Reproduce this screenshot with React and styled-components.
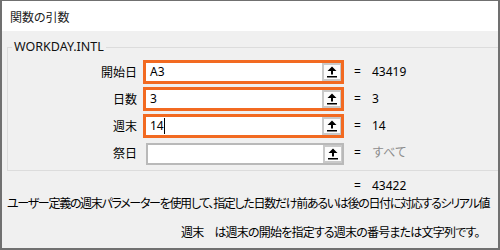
import React from "react";
import styled, { createGlobalStyle } from "styled-components";

const Global = createGlobalStyle`
  html, body { margin: 0; padding: 0; background: #f0f0f0; }
  body { font-family: "Noto Sans", "Noto Sans CJK JP", sans-serif; font-size: 12px; color: #000; }
`;

const Window = styled.div`
  width: 500px;
  height: 250px;
  box-sizing: border-box;
  border: 2px solid #707070;
  border-top-width: 1px;
  background: #f0f0f0;
  overflow: hidden;
  display: flex;
  flex-direction: column;
`;

const TitleBar = styled.div`
  height: 30px;
  flex: none;
  background: #fff;
  display: flex;
  align-items: center;
  padding-left: 8px;
  font-family: "Noto Sans CJK JP", sans-serif;
  font-feature-settings: "palt";
  font-size: 12px;
  color: #1a1a1a;
`;

const Body = styled.div`
  flex: 1;
  padding-left: 5px;
  display: flex;
  flex-direction: column;
  white-space: nowrap;
`;

const Group = styled.fieldset`
  margin: 9px -20px 0 0;
  padding: 0 0 2px 0;
  border: 1px solid #dcdcdc;
  border-right: none;
  min-width: 0;
`;

const Legend = styled.legend`
  margin-left: 4px;
  padding: 0 2px;
  font-size: 12.5px;
  line-height: 14px;
  color: #111;
`;

const Rows = styled.div`
  margin-top: 6px;
  display: flex;
  flex-direction: column;
`;

const Row = styled.div`
  height: 27px;
  display: flex;
  align-items: flex-start;
`;

const Label = styled.div`
  width: 129px;
  margin-right: 6px;
  line-height: 24px;
  text-align: right;
  font-family: "Noto Sans CJK JP", sans-serif;
`;

const Slot = styled.div`
  width: 201px;
  height: 24px;
  display: flex;
  justify-content: flex-end;
  align-items: flex-start;
`;

const Field = styled.div`
  box-sizing: border-box;
  width: ${(p) => (p.$active ? "201px" : "198px")};
  height: ${(p) => (p.$active ? "24px" : "22px")};
  margin-top: ${(p) => (p.$active ? "0" : "2px")};
  border: ${(p) => (p.$active ? "3px solid #f26a21" : "2px solid #b9b9b9")};
  background: #fff;
  display: flex;
  align-items: stretch;
`;

const FieldText = styled.div`
  flex: 1;
  padding-left: 4px;
  display: flex;
  align-items: center;
  line-height: 14px;
`;

const Caret = styled.span`
  display: inline-block;
  width: 1px;
  height: 16px;
  background: #000;
`;

const PickButton = styled.div`
  box-sizing: border-box;
  width: 19px;
  border: 2px solid #c9c9c9;
  border-right-width: 1px;
  background: #fcfcfc;
  display: flex;
  align-items: center;
  justify-content: center;
`;

const Eq = styled.span`
  margin-left: 10px;
  width: 18px;
  line-height: 24px;
`;

const Value = styled.span`
  line-height: 24px;
  color: ${(p) => (p.$muted ? "#8c8c8c" : "#000")};
  font-family: "Noto Sans", "Noto Sans CJK JP", sans-serif;
`;

const ResultRow = styled.div`
  margin-top: 8px;
  padding-left: 347px;
  line-height: 14px;
  display: flex;
`;

const ResultEq = styled.span`
  width: 18px;
`;

const Desc = styled.div`
  margin-top: 3px;
  line-height: 14px;
  font-family: "Noto Sans CJK JP", sans-serif;
  font-feature-settings: "palt";
  letter-spacing: -1.3px;
`;

const ArgHelp = styled.div`
  margin-top: 15px;
  padding-left: 174px;
  line-height: 14px;
  font-family: "Noto Sans CJK JP", sans-serif;
  font-feature-settings: "palt";
  letter-spacing: -0.8px;
`;

const ArgName = styled.span`
  margin-right: 11px;
`;

const UpIcon = () => (
  <svg width="10" height="12" viewBox="0 0 10 12">
    <path d="M5 0.5 L9.5 5 L6 5 L6 8.5 L4 8.5 L4 5 L0.5 5 Z" fill="#000" />
    <rect x="0" y="10" width="10" height="1.5" fill="#000" />
  </svg>
);

const args = [
  { label: "開始日", text: "A3", value: "43419", active: true },
  { label: "日数", text: "3", value: "3", active: true },
  { label: "週末", text: "14", value: "14", active: true, caret: true },
  { label: "祭日", text: "", value: "すべて", active: false, muted: true },
];

export default function App() {
  return (
    <>
      <Global />
      <Window>
        <TitleBar>関数の引数</TitleBar>
        <Body>
          <Group>
            <Legend>WORKDAY.INTL</Legend>
            <Rows>
              {args.map((a) => (
                <Row key={a.label}>
                  <Label>{a.label}</Label>
                  <Slot>
                    <Field $active={a.active}>
                      <FieldText>
                        {a.text}
                        {a.caret && <Caret />}
                      </FieldText>
                      <PickButton>
                        <UpIcon />
                      </PickButton>
                    </Field>
                  </Slot>
                  <Eq>=</Eq>
                  <Value $muted={a.muted}>{a.value}</Value>
                </Row>
              ))}
            </Rows>
          </Group>
          <ResultRow>
            <ResultEq>=</ResultEq>
            <span>43422</span>
          </ResultRow>
          <Desc>
            ユーザー定義の週末パラメーターを使用して、指定した日数だけ前あるいは後の日付に対応するシリアル値
          </Desc>
          <ArgHelp>
            <ArgName>週末</ArgName>は週末の開始を指定する週末の番号または文字列です。
          </ArgHelp>
        </Body>
      </Window>
    </>
  );
}
